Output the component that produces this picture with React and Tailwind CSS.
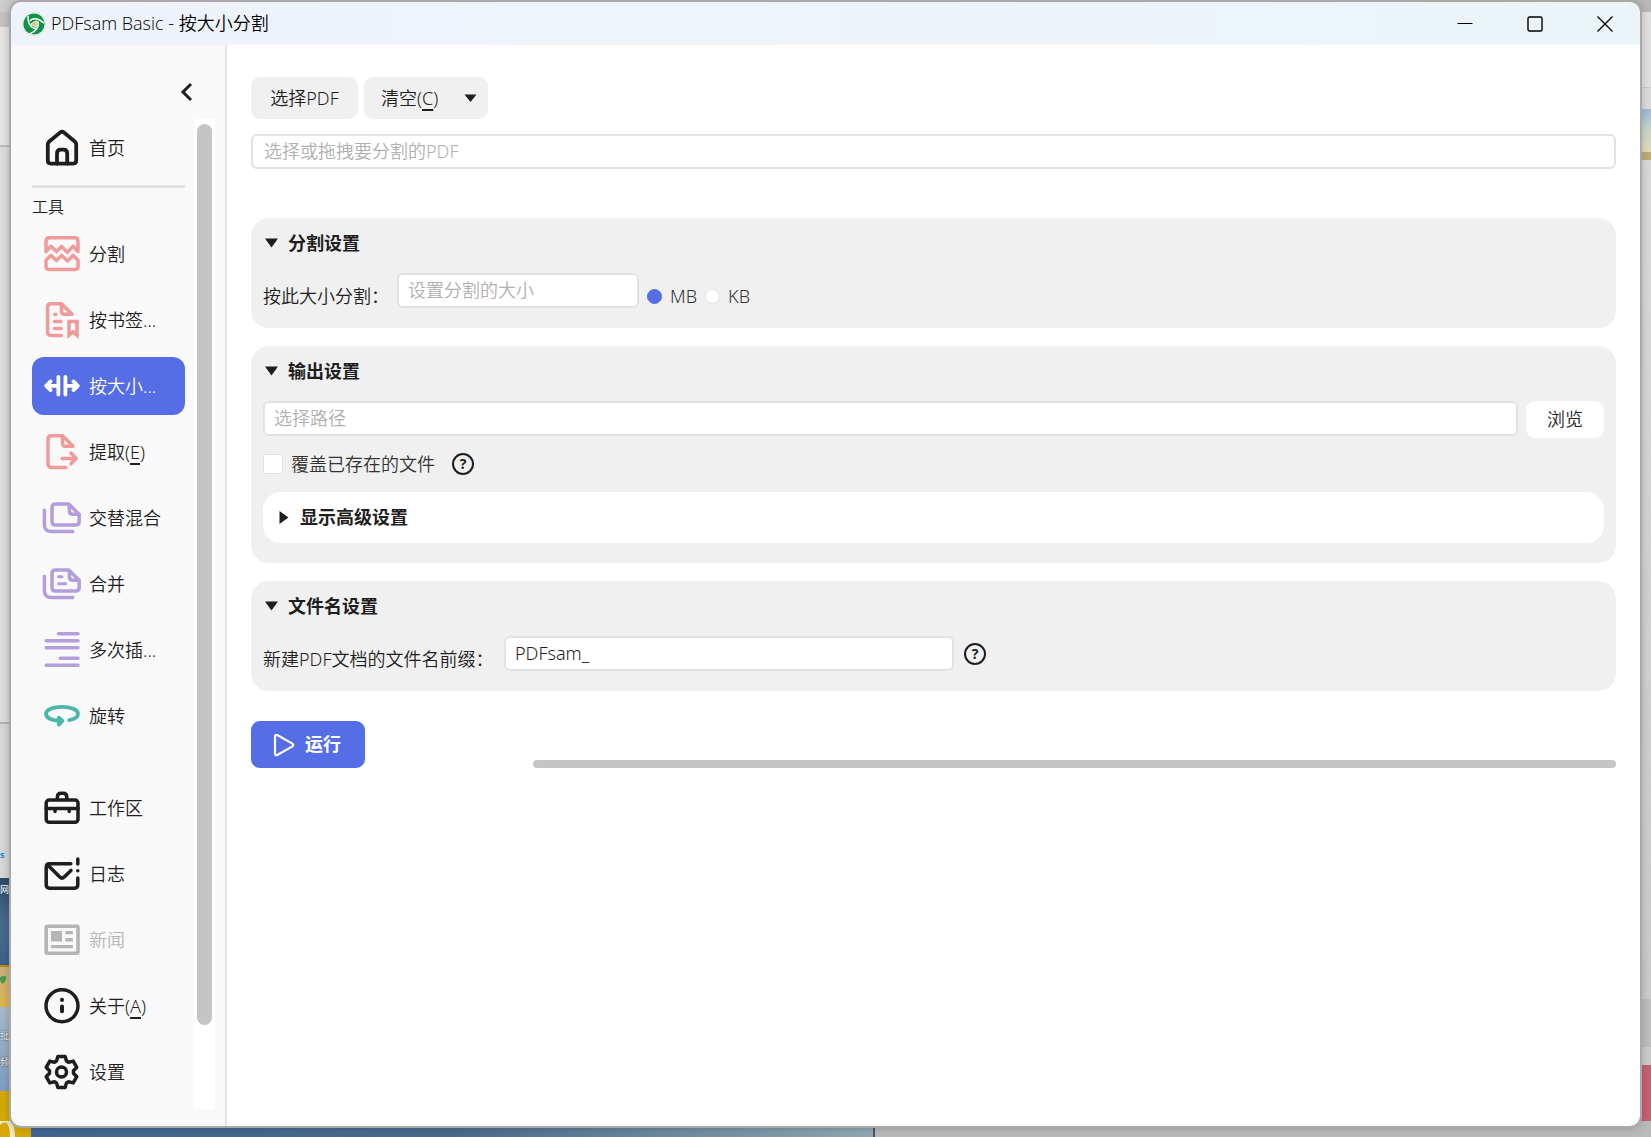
import React, { useState } from "react";
import clsx from "clsx";

const INK = "#1e1e1e";
const RED = "#f09a99";
const PURPLE = "#b39ddb";
const TEAL = "#4db6ac";

// six teeth, 60 degrees apart
const gearPoints = [0, 60, 120, 180, 240, 300]
  .flatMap((deg) => {
    const a = (deg * Math.PI) / 180;
    return [
      [-5, -11],
      [-3.6, -15.6],
      [3.6, -15.6],
      [5, -11],
    ].map(([x, y]) => {
      const px = 20.5 + x * Math.cos(a) - y * Math.sin(a);
      const py = 21 + x * Math.sin(a) + y * Math.cos(a);
      return `${px.toFixed(1)},${py.toFixed(1)}`;
    });
  })
  .join(" ");

function Icon({ color, width = 3.5, children }) {
  return (
    <svg
      className="size-[42px] shrink-0"
      viewBox="0 0 42 42"
      fill="none"
      stroke={color}
      strokeWidth={width}
      strokeLinecap="round"
      strokeLinejoin="round"
      aria-hidden="true"
    >
      {children}
    </svg>
  );
}

const icons = {
  home: (
    <Icon color={INK} width={3.8}>
      <path d="M6.8 17.2Q6.8 15.8 7.9 14.8L19 5.6Q21 4 23 5.6L34.1 14.8Q35.2 15.8 35.2 17.2V33.6Q35.2 36.6 32.2 36.6H9.8Q6.8 36.6 6.8 33.6Z" />
      <path d="M16 36.6V26.4Q16 22.6 19.6 22.6H22.6Q26.2 22.6 26.2 26.4V36.6" />
    </Icon>
  ),
  split: (
    <Icon color={RED}>
      <path d="M5 18.6V8.3Q5 4.8 8.5 4.8H33.5Q37 4.8 37 8.3V18.6L32 13.2L26.5 19.4L20.5 13.4L15.5 18.6L10 13.2Z" />
      <path d="M5 27V33.2Q5 36.6 8.5 36.6H33.5Q37 36.6 37 33.2V27L32 22.4L26.5 28L20.7 22.4L15.5 27.6L10 22.4Z" />
    </Icon>
  ),
  bookmark: (
    <Icon color={RED}>
      <path d="M20.5 36.4H10Q6.6 36.4 6.6 33V8.2Q6.6 4.8 10 4.8H20.5L31 15.3H23.5Q20.5 15.3 20.5 12.3V4.8" />
      <path d="M13.6 15.5H14.8M13.6 22.4H20M13.6 29.4H20" />
      <path strokeLinejoin="miter" d="M28 36.2V22.6H36V36.2L32 32.8Z" />
    </Icon>
  ),
  size: (
    <Icon color="#fff" width={3.8}>
      <path d="M17.4 12V29.5M24.4 12V29.5M5.2 20.8H17.4M24.4 20.8H36.8M9.6 16.4L5.2 20.8L9.6 25.2M32.4 16.4L36.8 20.8L32.4 25.2" />
    </Icon>
  ),
  extract: (
    <Icon color={RED}>
      <path d="M24.8 36.4H10.4Q7 36.4 7 33V8.2Q7 4.8 10.4 4.8H21.5L32 15.3H24.5Q21.5 15.3 21.5 12.3V4.8" />
      <path d="M21 27.4H35M30 22L35.2 27.4L30 32.8" />
    </Icon>
  ),
  mix: (
    <Icon color={PURPLE}>
      <path d="M11 10.5Q11 7 14.5 7H27.8L38.2 17.5V24.5Q38.2 28 34.7 28H14.5Q11 28 11 24.5Z" />
      <path d="M28.4 8V13.8Q28.4 17.3 31.9 17.3H38" />
      <path d="M3.4 13.3V27.5Q3.4 34.6 10.5 34.6H31.8" />
    </Icon>
  ),
  merge: (
    <Icon color={PURPLE}>
      <path d="M11 10.5Q11 7 14.5 7H27.8L38.2 17.5V24.5Q38.2 28 34.7 28H14.5Q11 28 11 24.5Z" />
      <path d="M28.4 8V13.8Q28.4 17.3 31.9 17.3H38" />
      <path d="M3.4 13.3V27.5Q3.4 34.6 10.5 34.6H31.8" />
      <path strokeWidth="3" d="M17.5 13.7H21M17.5 20.7H24.6" />
    </Icon>
  ),
  insert: (
    <Icon color={PURPLE}>
      <path d="M17.5 4.7H37M5.2 11.7H37M5.2 18.7H37M19.3 29.3H37M5.2 36.3H37" />
    </Icon>
  ),
  rotate: (
    <Icon color={TEAL} width={3.8}>
      <path d="M28.2 25.2C33.8 24.2 37 21.7 37 18.8C37 14.7 30 11.8 21 11.8S5 14.7 5 18.8C5 22.8 10.5 25.6 20.5 26" />
      <path d="M17.8 22.6L21.4 26L17.8 29.6Z" />
    </Icon>
  ),
  workspace: (
    <Icon color={INK} width={3.5}>
      <rect x="5.2" y="13" width="31.8" height="22.3" rx="3" />
      <path d="M5.2 21.4H37M14 22V24.6M28.2 22V24.6M16.4 12.4V10Q16.4 6.2 20 6.2H22.2Q25.8 6.2 25.8 10V12.4" />
    </Icon>
  ),
  logs: (
    <Icon color={INK} width={3.5}>
      <path d="M29.8 10.8H8.6Q5.2 10.8 5.2 14.2V31.8Q5.2 35.2 8.6 35.2H33.4Q36.8 35.2 36.8 31.8V25" />
      <path d="M7 12.2L18.8 24Q21 26.2 23.2 24L30 17.4M36.8 6V11M36.8 17.7V17.8" />
    </Icon>
  ),
  news: (
    <Icon color="#b5b5b5" width={3.6}>
      <rect x="5.2" y="7.2" width="31.8" height="27" rx="1.5" />
      <g fill="#b5b5b5" stroke="none">
        <path d="M10 12H21V22.6H10ZM24.4 12H31.8V15.2H24.4ZM24.4 19H31.8V22.4H24.4ZM10 26H31.8V29.2H10Z" />
      </g>
    </Icon>
  ),
  about: (
    <Icon color={INK}>
      <circle cx="21" cy="20.8" r="16" />
      <path strokeWidth="4" d="M21 14.8V14.9M21 21.6V26.2" />
    </Icon>
  ),
  settings: (
    <Icon color={INK}>
      <polygon points={gearPoints} />
      <circle cx="20.5" cy="21" r="5" />
    </Icon>
  ),
};

const tools = [
  { id: "split", label: "分割" },
  { id: "bookmark", label: "按书签..." },
  { id: "size", label: "按大小..." },
  { id: "extract", label: "提取", shortcut: "E" },
  { id: "mix", label: "交替混合" },
  { id: "merge", label: "合并" },
  { id: "insert", label: "多次插..." },
  { id: "rotate", label: "旋转" },
];

const system = [
  { id: "workspace", label: "工作区" },
  { id: "logs", label: "日志" },
  { id: "news", label: "新闻", disabled: true },
  { id: "about", label: "关于", shortcut: "A" },
  { id: "settings", label: "设置" },
];

function Label({ text, shortcut }) {
  return (
    <span>
      {text}
      {shortcut && (
        <>
          (<span className="underline decoration-2 underline-offset-4">{shortcut}</span>)
        </>
      )}
    </span>
  );
}

function NavItem({ item, active }) {
  return (
    <button
      disabled={item.disabled}
      className={clsx(
        "flex h-[58px] w-full items-center gap-[6px] rounded-xl pl-[9px] text-left whitespace-nowrap",
        active && "bg-[#556ee6] text-white",
        item.disabled && "text-[#b5b5b5]"
      )}
    >
      {icons[item.id]}
      <Label text={item.label} shortcut={item.shortcut} />
    </button>
  );
}

function Logo() {
  return (
    <svg className="size-[24px]" viewBox="0 0 24 24" aria-hidden="true">
      <circle cx="12" cy="12" r="11.6" fill="#fff" stroke="#ccd3dc" strokeWidth="0.6" />
      <circle cx="12" cy="12" r="10.6" fill="#0b9444" />
      <g fill="none" stroke="#fff" strokeWidth="1.5" strokeLinecap="round">
        <path d="M8 8.8C11 5.4 16.6 6 21.4 10.6" />
        <path d="M15.8 9.6C17.6 14 14.4 19 8.2 21.6" />
        <path d="M13.4 16.4C8.6 16 5.4 11 6 4.4" />
      </g>
      <path d="M8.8 12L14.2 8.8V15.2Z" fill="#f9b04b" stroke="#fff" strokeWidth="1" />
    </svg>
  );
}

function Caret({ open = true }) {
  return open ? (
    <svg className="h-[10px] w-[13px]" viewBox="0 0 13 10" fill={INK} aria-hidden="true">
      <path d="M0 0.5H13L6.5 9.5Z" />
    </svg>
  ) : (
    <svg className="h-[13px] w-[10px]" viewBox="0 0 10 13" fill={INK} aria-hidden="true">
      <path d="M0.5 0V13L9.5 6.5Z" />
    </svg>
  );
}

function Panel({ title, children }) {
  const [open, setOpen] = useState(true);

  return (
    <section className="rounded-[18px] bg-[#f0f0f0] px-3 pt-[13px] pb-5">
      <button
        onClick={() => setOpen(!open)}
        className="flex items-center gap-[10px] pl-[2px] font-bold leading-6"
      >
        <Caret open={open} />
        {title}
      </button>
      {open && <div className="mt-[18px]">{children}</div>}
    </section>
  );
}

function Help({ label }) {
  return (
    <button
      aria-label={label}
      className="flex size-[22px] items-center justify-center rounded-full border-2 border-[#1e1e1e] text-[14px] leading-none font-bold"
    >
      ?
    </button>
  );
}

const field =
  "h-[35px] min-w-0 rounded-md border-2 border-[#e2e2e2] bg-white pb-[2px] placeholder-[#b0b0b0] outline-none";

// slivers of the desktop that stay visible round the window
function Desktop() {
  return (
    <div className="col-start-1 row-start-1 flex flex-col overflow-hidden bg-[#b8b8b8]" aria-hidden="true">
      <div className="flex h-[12px] shrink-0">
        <div className="w-[40px] bg-[#cdcdcd]" />
        <div className="w-[81px] bg-[#454043]" />
      </div>
      <div className="flex flex-1 justify-between">
        <div className="flex w-[31px] flex-col overflow-hidden text-[9px] font-normal text-white">
          <div className="h-[15px] bg-[#c4c4c4]" />
          <div className="h-[120px] border-b-2 border-[#bdbdbd] bg-[#e6e6e6]" />
          <div className="h-[577px] border-b-2 border-[#b4b4b4] bg-[#dedede]" />
          <div className="h-[154px] bg-[#d8d8d8] pt-[124px] font-bold text-[#1d7fd1]">s</div>
          <div className="h-[87px] bg-linear-to-b from-[#2d4a66] via-[#4a6c92] to-[#3d638c] leading-6">
            网
          </div>
          <div className="h-[42px] border-t-2 border-[#c08a10] bg-linear-to-b from-[#c9b27c] to-[#e2b44c] pt-2">
            <svg className="h-[9px] w-[7px]" viewBox="0 0 7 9" fill="#4f9a4c">
              <path d="M0 2L6 0.5Q7 6 2.5 9L0 6Z" />
            </svg>
          </div>
          <div className="flex-1 bg-linear-to-b from-[#a9bccb] to-[#7f9fc4] pt-[16px] leading-[26px] [text-shadow:0_0_2px_#000]">
            <div>批</div>
            <div>频</div>
          </div>
          <div className="h-[30px] bg-[#d8aa00]" />
        </div>
        <div className="flex w-[24px] flex-col bg-[#d4d4d4]">
          <div className="h-[76px] border-b border-[#cccccc] bg-[#e2e2e2]" />
          <div className="h-[21px] bg-[#dedede]" />
          <div className="h-[51px] border-b-8 border-[#c3ad70] bg-linear-to-b from-[#9dbbe0] via-[#ccd8cc] to-[#e4dfb8]" />
          <div className="flex-1 bg-linear-to-b from-[#dcdcdc] to-[#cccccc]" />
          <div className="h-[48px] bg-[#bfbfbf]" />
          <div className="h-[18px] bg-[#cdcdcd]" />
          <div className="h-[56px] bg-[#c9616f]" />
        </div>
      </div>
      <div className="flex h-[16px] shrink-0">
        <div className="w-[31px] bg-[#d8aa00]">
          <svg className="h-[16px] w-[16px]" viewBox="0 0 16 16" fill="none" stroke="#f0e6c8" strokeWidth="5">
            <path d="M-2 2Q12 -8 12.5 16" />
          </svg>
        </div>
        <div className="w-[844px] border-r-2 border-[#555555] bg-linear-to-r from-[#3f6894] via-[#4a6b8c] to-[#8fa9b3]" />
        <div className="flex-1 bg-[#bababa]" />
      </div>
    </div>
  );
}

function Sidebar() {
  return (
    <aside className="flex w-[216px] shrink-0 flex-col border-r-2 border-[#e4e4e4] bg-[#f9f9f9]">
      <div className="flex h-[74px] justify-end pt-[37px] pr-[31px]">
        <button aria-label="收起" className="h-[20px]">
          <svg className="h-[20px] w-[16px]" viewBox="0 0 16 20" fill="none" stroke={INK} strokeWidth="3" aria-hidden="true">
            <path d="M13 2L5 10L13 18" />
          </svg>
        </button>
      </div>
      <div className="mb-[17px] flex flex-1 pl-[21px]">
        <nav className="w-[153px]">
          <NavItem item={{ id: "home", label: "首页" }} />
          <div className="mt-2 h-[3px] bg-[#e2e2e2]" />
          <div className="h-[37px] pt-[7px] text-[16px] leading-6">工具</div>
          <div className="flex flex-col gap-2">
            {tools.map((item) => (
              <NavItem key={item.id} item={item} active={item.id === "size"} />
            ))}
          </div>
          <div className="mt-[34px] flex flex-col gap-2">
            {system.map((item) => (
              <NavItem key={item.id} item={item} />
            ))}
          </div>
        </nav>
        <div className="ml-[9px] flex w-[21px] flex-col items-center bg-white pt-[5px] pb-[84px]">
          <div className="w-[15px] flex-1 rounded-full bg-[#c5c5c5]" />
        </div>
      </div>
    </aside>
  );
}

function SplitBySize() {
  const [unit, setUnit] = useState("MB");
  const [prefix, setPrefix] = useState("PDFsam_");

  return (
    <main className="min-w-0 flex-1 bg-white px-6 pt-8">
      <div className="flex gap-[6px]">
        <button className="h-[42px] w-[107px] rounded-[9px] bg-[#f0f0f0]">选择PDF</button>
        <button className="flex h-[42px] w-[124px] items-center justify-between rounded-[9px] bg-[#f0f0f0] pr-[11px] pl-[17px]">
          <Label text="清空" shortcut="C" />
          <svg className="h-[8px] w-[13px]" viewBox="0 0 13 8" fill={INK} aria-hidden="true">
            <path d="M0.5 0.5H12.5L6.5 8Z" />
          </svg>
        </button>
      </div>
      <input
        aria-label="选择或拖拽要分割的PDF"
        placeholder="选择或拖拽要分割的PDF"
        className={clsx(field, "mt-[15px] w-full px-[11px]")}
      />

      <div className="mt-[49px] flex flex-col gap-[18px]">
        <Panel title="分割设置">
          <div className="flex items-end">
            <label htmlFor="size" className="w-[134px] leading-6">按此大小分割：</label>
            <input id="size" placeholder="设置分割的大小" className={clsx(field, "w-[242px] px-[9px]")} />
            {["MB", "KB"].map((u) => (
              <label key={u} className="ml-2 flex h-6 items-center gap-2 leading-6 text-[#333333]">
                <input
                  type="radio"
                  name="unit"
                  checked={unit === u}
                  onChange={() => setUnit(u)}
                  className="size-[15px] appearance-none rounded-full border border-[#e2e2e2] bg-white checked:border-[#556ee6] checked:bg-[#556ee6]"
                />
                {u}
              </label>
            ))}
          </div>
        </Panel>

        <Panel title="输出设置">
          <div className="flex items-start gap-2">
            <input aria-label="选择路径" placeholder="选择路径" className={clsx(field, "flex-1 px-[9px]")} />
            <button className="h-[37px] w-[78px] rounded-[9px] bg-white">浏览</button>
          </div>
          <div className="mt-[15px] flex items-center">
            <label className="flex items-center gap-2 leading-[22px] text-[#333333]">
              <input
                type="checkbox"
                className="size-[20px] appearance-none rounded-[3px] border border-[#e2e2e2] bg-white checked:bg-[#556ee6]"
              />
              覆盖已存在的文件
            </label>
            <span className="ml-[17px]">
              <Help label="覆盖说明" />
            </span>
          </div>
          <button className="mt-[17px] flex h-[51px] w-full items-center gap-[11px] rounded-[18px] bg-white pl-[16px] font-bold">
            <Caret open={false} />
            显示高级设置
          </button>
        </Panel>

        <Panel title="文件名设置">
          <div className="flex items-end">
            <label htmlFor="prefix" className="w-[241px] leading-6">新建PDF文档的文件名前缀：</label>
            <input
              id="prefix"
              value={prefix}
              onChange={(e) => setPrefix(e.target.value)}
              className={clsx(field, "w-[450px] px-[9px]")}
            />
            <span className="ml-[10px] self-center">
              <Help label="前缀说明" />
            </span>
          </div>
        </Panel>
      </div>

      <div className="mt-[30px] flex items-end">
        <button className="flex h-[47px] w-[114px] items-center gap-[9px] rounded-[9px] bg-[#556ee6] pl-[21px] font-bold text-white">
          <svg className="h-[24px] w-[24px]" viewBox="0 0 24 24" fill="none" stroke="#fff" strokeWidth="2.2" strokeLinejoin="round" aria-hidden="true">
            <path d="M3 3.8Q3 0.8 5.6 2.2L20 10.4Q22.6 12 20 13.6L5.6 21.8Q3 23.2 3 20.2Z" />
          </svg>
          运行
        </button>
        <div className="ml-[168px] h-2 flex-1 rounded-full bg-[#c5c5c5]" />
      </div>
    </main>
  );
}

function App() {
  return (
    <div className="grid min-h-screen font-['Noto_Sans','Noto_Sans_CJK_SC',sans-serif] text-[18px] font-[350] text-[#1e1e1e]">
      <Desktop />
      <div className="col-start-1 row-start-1 mx-[11px] mt-[2px] mb-[11px] flex flex-col overflow-hidden rounded-[10px] shadow-[0_0_0_2px_#a9a9a9,0_0_12px_rgba(0,0,0,0.3)]">
        <header className="flex h-[43px] shrink-0 items-center bg-linear-to-r from-[#eef3fb] to-[#ebf5f8] pl-[11px] text-black">
          <Logo />
          <h1 className="flex-1 pb-[2px] pl-[5px] font-['Open_Sans','Noto_Sans_CJK_SC',sans-serif] leading-6">PDFsam Basic - 按大小分割</h1>
          <button aria-label="最小化" className="flex h-full w-[70px] items-center justify-center">
            <svg className="size-[16px]" viewBox="0 0 16 16" stroke="#000" aria-hidden="true">
              <path d="M0.5 7.5H15.5" />
            </svg>
          </button>
          <button aria-label="最大化" className="flex h-full w-[70px] items-center justify-center">
            <svg className="size-[16px]" viewBox="0 0 16 16" fill="none" stroke="#000" strokeWidth="1.4" aria-hidden="true">
              <rect x="1" y="1" width="14" height="14" rx="1.5" />
            </svg>
          </button>
          <button aria-label="关闭" className="flex h-full w-[70px] items-center justify-center">
            <svg className="size-[16px]" viewBox="0 0 16 16" stroke="#000" strokeWidth="1.3" aria-hidden="true">
              <path d="M0.5 0.5L15.5 15.5M15.5 0.5L0.5 15.5" />
            </svg>
          </button>
        </header>
        <div className="flex flex-1">
          <Sidebar />
          <SplitBySize />
        </div>
      </div>
    </div>
  );
}

export default App;
